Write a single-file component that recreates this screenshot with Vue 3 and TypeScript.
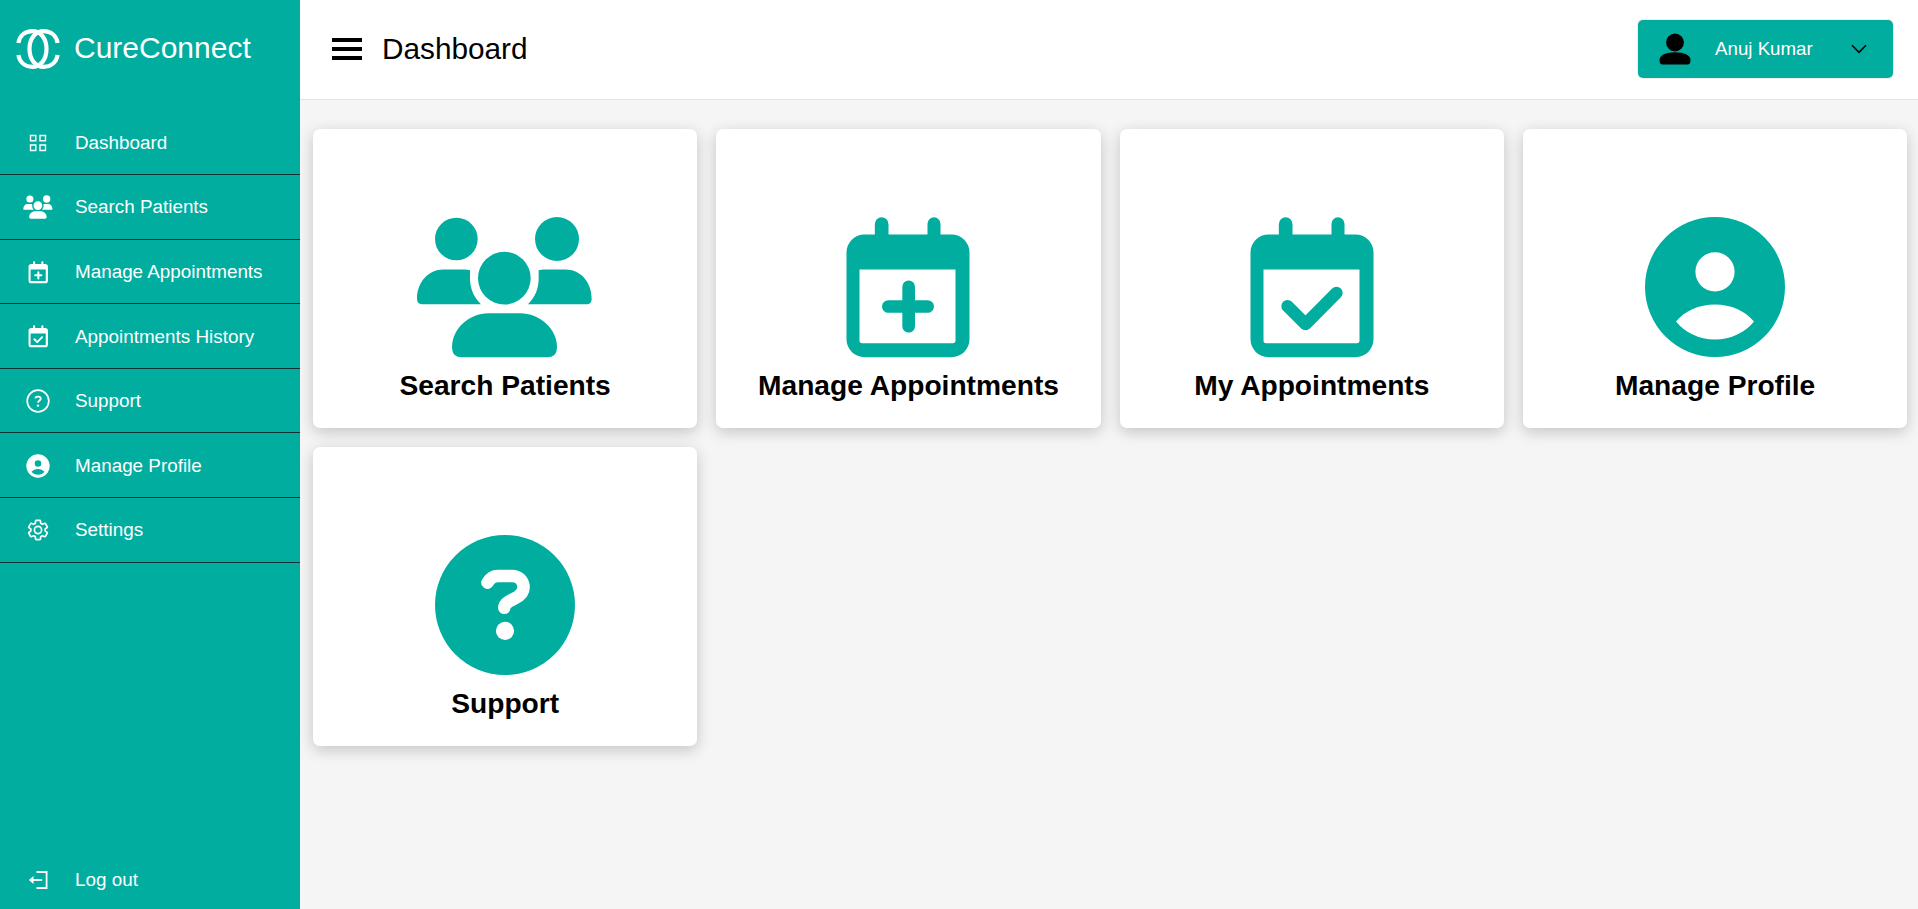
<script setup lang="ts">
interface NavItem {
  label: string
  icon: string
  size?: 'cal' | 'large' | 'wide'
}

interface Tile {
  label: string
  icon: string
  wide?: boolean
}

const navItems: NavItem[] = [
  { label: 'Dashboard', icon: 'nav-grid' },
  { label: 'Search Patients', icon: 'groups', size: 'wide' },
  { label: 'Manage Appointments', icon: 'cal-plus', size: 'cal' },
  { label: 'Appointments History', icon: 'cal-check', size: 'cal' },
  { label: 'Support', icon: 'nav-help' },
  { label: 'Manage Profile', icon: 'profile', size: 'large' },
  { label: 'Settings', icon: 'nav-gear' },
]

const tiles: Tile[] = [
  { label: 'Search Patients', icon: 'groups', wide: true },
  { label: 'Manage Appointments', icon: 'cal-plus' },
  { label: 'My Appointments', icon: 'cal-check' },
  { label: 'Manage Profile', icon: 'profile' },
  { label: 'Support', icon: 'help' },
]
</script>

<template>
  <div class="layout">
    <!-- shared icons, used by the sidebar and the tiles -->
    <svg class="sprite" xmlns="http://www.w3.org/2000/svg">
      <symbol id="groups" viewBox="345 247.5 540 504">
        <circle cx="469" cy="355.5" r="64" />
        <circle cx="771" cy="355.5" r="66" />
        <circle cx="613" cy="473" r="79" />
        <path d="M486 710H741Q771 710 771 680C771 625 720 578 660 578H566C506 578 456 625 456 680Q456 710 486 710Z" />
        <path d="M365 551H543C522 530 510 505 510 473V449C500 447 490 447 480 447H430C385 447 351 485 351 535Q351 551 365 551Z" />
        <path d="M862 551H684C705 530 716 505 716 473V449C726 447 736 447 746 447H797C842 447 875 485 875 535Q875 551 862 551Z" />
      </symbol>
      <symbol id="cal-check" viewBox="352.5 247.5 504 504">
        <path fill-rule="evenodd" d="M505 342V311A20.5 20.5 0 0 1 546 311V342H663V310A19.5 19.5 0 0 1 702 310V342H735A54 54 0 0 1 789 396V656A54 54 0 0 1 735 710H474A54 54 0 0 1 420 656V396A54 54 0 0 1 474 342ZM459 447V660Q459 668 467 668H739Q747 668 747 660V447Z" />
        <path d="M531 557L585 611L678 517" fill="none" stroke="currentColor" stroke-width="37" stroke-linecap="round" stroke-linejoin="round" />
      </symbol>
      <symbol id="cal-plus" viewBox="352.5 247.5 504 504">
        <path fill-rule="evenodd" d="M505 342V311A20.5 20.5 0 0 1 546 311V342H663V310A19.5 19.5 0 0 1 702 310V342H735A54 54 0 0 1 789 396V656A54 54 0 0 1 735 710H474A54 54 0 0 1 420 656V396A54 54 0 0 1 474 342ZM459 447V660Q459 668 467 668H739Q747 668 747 660V447Z" />
        <path d="M606.5 499V617M545.5 558H663.5" fill="none" stroke="currentColor" stroke-width="38" stroke-linecap="round" />
      </symbol>
      <symbol id="profile" viewBox="0 0 24 24">
        <path fill-rule="evenodd" d="M12 2A10 10 0 1 0 12 22A10 10 0 1 0 12 2ZM12 7.03A2.8 2.8 0 1 1 12 12.63A2.8 2.8 0 1 1 12 7.03ZM6.43 16.93C7.7 15.4 9.7 14.5 12 14.5C14.3 14.5 16.3 15.4 17.57 16.93C16.3 18.5 14.3 19.5 12 19.5C9.7 19.5 7.7 18.5 6.43 16.93Z" />
      </symbol>
      <symbol id="help" viewBox="0 0 24 24">
        <circle cx="12" cy="12" r="10" />
        <path d="M9.5 8.8C9.9 8.1 10.4 7.85 11 7.85H13C13.9 7.85 14.65 8.5 14.65 9.5C14.65 10.3 14.1 10.7 13.4 11.05C12.5 11.5 11.9 11.8 11.9 12.4" fill="none" stroke="#fff" stroke-width="1.8" stroke-linecap="round" stroke-linejoin="round" />
        <circle cx="12" cy="15.7" r="1.3" fill="#fff" />
      </symbol>
      <symbol id="nav-help" viewBox="0 0 24 24">
        <circle cx="12" cy="12" r="10.8" fill="none" stroke="currentColor" stroke-width="1.7" />
        <path d="M9.2 9.4C9.5 8.2 10.5 7.6 12 7.6C13.7 7.6 14.8 8.4 14.8 9.7C14.8 11.4 12 11.7 12 13.8" fill="none" stroke="currentColor" stroke-width="1.8" />
        <circle cx="12" cy="16.6" r="1.2" />
      </symbol>
      <symbol id="nav-grid" viewBox="0 0 24 24">
        <path d="M4.5 4.5H9.8V9.8H4.5ZM14 4.5H19.5V9.8H14ZM4.5 14H9.8V19.5H4.5ZM14 14H19.5V19.5H14Z" fill="none" stroke="currentColor" stroke-width="1.4" />
      </symbol>
      <symbol id="nav-gear" viewBox="0 0 24 24">
        <path fill="none" stroke="currentColor" stroke-width="1.7" d="M19.14 12.94c.04-.3.06-.61.06-.94 0-.32-.02-.64-.07-.94l2.03-1.58c.18-.14.23-.41.12-.61l-1.92-3.32c-.12-.22-.37-.29-.59-.22l-2.39.96c-.5-.38-1.03-.7-1.62-.94L14.4 2.81c-.04-.24-.24-.41-.48-.41h-3.84c-.24 0-.43.17-.47.41L9.25 5.35c-.59.24-1.13.57-1.62.94L5.24 5.33c-.22-.08-.47 0-.59.22L2.74 8.87c-.12.21-.08.47.12.61l2.03 1.58c-.05.3-.09.63-.09.94s.02.64.07.94l-2.03 1.58c-.18.14-.23.41-.12.61l1.92 3.32c.12.22.37.29.59.22l2.39-.96c.5.38 1.03.7 1.62.94l.36 2.54c.05.24.24.41.48.41h3.84c.24 0 .44-.17.47-.41l.36-2.54c.59-.24 1.13-.56 1.62-.94l2.39.96c.22.08.47 0 .59-.22l1.92-3.32c.12-.22.07-.47-.12-.61L19.14 12.94zM12 15.6c-1.98 0-3.6-1.62-3.6-3.6s1.62-3.6 3.6-3.6 3.6 1.62 3.6 3.6-1.62 3.6-3.6 3.6z" />
      </symbol>
    </svg>

    <aside class="sidebar">
      <div class="brand">
        <svg class="brand__logo" viewBox="0 0 44 40" fill="none" stroke="#fff" stroke-width="4.2">
          <path d="M2.4 14C3.6 6.5 9 2.2 16.5 2.2C24.5 2.2 30.5 9.5 30.5 20C30.5 30.5 24.5 37.8 16.5 37.8C9 37.8 3.6 33.5 2.4 26" />
          <path d="M41.6 14C40.4 6.5 35 2.2 27.5 2.2C19.5 2.2 13.5 9.5 13.5 20C13.5 30.5 19.5 37.8 27.5 37.8C35 37.8 40.4 33.5 41.6 26" />
        </svg>
        <span class="brand__name">CureConnect</span>
      </div>

      <nav class="nav">
        <a v-for="item in navItems" :key="item.label" class="nav__item">
          <span class="nav__icon">
            <svg class="nav__svg" :class="item.size && `nav__svg--${item.size}`"><use :href="'#' + item.icon" /></svg>
          </span>
          <span class="nav__label">{{ item.label }}</span>
        </a>
      </nav>

      <a class="nav__item nav__item--logout">
        <span class="nav__icon">
          <svg class="nav__svg" viewBox="0 0 24 24">
            <path d="M10.5 4H20.6V20H10.5" fill="none" stroke="currentColor" stroke-width="1.8" />
            <path d="M6 12H16.2" fill="none" stroke="currentColor" stroke-width="1.8" />
            <path d="M7.5 8L2.8 12L7.5 16Z" />
          </svg>
        </span>
        <span class="nav__label">Log out</span>
      </a>
    </aside>

    <div class="main">
      <header class="topbar">
        <button class="menu-btn" type="button" aria-label="Menu">
          <span /><span /><span />
        </button>
        <h1 class="topbar__title">Dashboard</h1>
        <div class="user">
          <svg class="user__avatar" viewBox="0 0 32 32">
            <circle cx="16" cy="9.5" r="8.9" />
            <path d="M.5 27C.5 22 7 19.2 16 19.2C25 19.2 31.5 22 31.5 27C31.5 30 30.5 31.5 28.5 31.5H3.5C1.5 31.5 .5 30 .5 27Z" />
          </svg>
          <span class="user__name">Anuj Kumar</span>
          <svg class="user__chevron" viewBox="0 0 16 10" fill="none" stroke="#000" stroke-width="1.6">
            <path d="M1 1.2L8 8.4L15 1.2" />
          </svg>
        </div>
      </header>

      <section class="tiles">
        <div v-for="tile in tiles" :key="tile.label" class="tile">
          <svg class="tile__icon" :class="{ 'tile__icon--wide': tile.wide }"><use :href="'#' + tile.icon" /></svg>
          <h2 class="tile__label">{{ tile.label }}</h2>
        </div>
      </section>
    </div>
  </div>
</template>

<style>
html,
body {
  margin: 0;
  padding: 0;
}
</style>

<style scoped>
.layout {
  display: flex;
  height: 909px;
  overflow: hidden;
  font-family: "Liberation Sans", Arial, sans-serif;
  background: #f5f5f5;
}

.sprite {
  display: none;
}

.sidebar {
  display: flex;
  flex-direction: column;
  flex: 0 0 300px;
  background: #00ad9f;
  color: #fff;
}

.brand {
  display: flex;
  align-items: center;
  gap: 14px;
  height: 96px;
  margin-bottom: 14.5px;
  padding-left: 16px;
  box-sizing: border-box;
}

.brand__logo {
  width: 44px;
  height: 40px;
  margin-top: 2.6px;
}

.brand__name {
  font-size: 30px;
}

.nav {
  display: flex;
  flex-direction: column;
}

.nav__item {
  display: flex;
  align-items: center;
  gap: 23px;
  height: 64.6px;
  box-sizing: border-box;
  padding: 1px 0 0 24px;
  border-bottom: 1px solid #0b2f33;
}

.nav__item--logout {
  margin-top: auto;
  margin-bottom: -3px;
  border-bottom: 0;
}

.nav__icon {
  display: flex;
  justify-content: center;
  width: 28px;
}

.nav__svg {
  flex: none;
  width: 24px;
  height: 24px;
  fill: currentColor;
}

.nav__svg--cal {
  width: 26.5px;
  height: 26.5px;
}

.nav__svg--large {
  width: 28px;
  height: 28px;
}

.nav__svg--wide {
  width: 30px;
  height: 28px;
}

.nav__label {
  font-size: 18.85px;
}

.main {
  display: flex;
  flex-direction: column;
  flex: 1;
  min-width: 0;
}

.topbar {
  display: flex;
  align-items: center;
  height: 100px;
  box-sizing: border-box;
  padding: 0 25px 2px 32px;
  background: #fff;
  border-bottom: 1px solid #e4e4e4;
}

.menu-btn {
  display: flex;
  flex-direction: column;
  justify-content: space-between;
  width: 30px;
  height: 22px;
  margin-right: 20px;
  padding: 0;
  border: 0;
  background: none;
}

.menu-btn span {
  height: 4px;
  background: #000;
}

.topbar__title {
  margin: 0;
  font-size: 29.76px;
  font-weight: 400;
  color: #000;
}

.user {
  display: flex;
  align-items: center;
  width: 255px;
  height: 58px;
  margin-left: auto;
  box-sizing: border-box;
  padding-left: 21px;
  background: #00ad9f;
  border-radius: 5px;
  box-shadow: 0 0 0 1px #eee;
}

.user__avatar {
  width: 32px;
  height: 32px;
}

.user__name {
  margin-left: 24px;
  font-size: 18.72px;
  color: #fff;
}

.user__chevron {
  width: 16px;
  height: 10px;
  margin-left: 38px;
}

.tiles {
  display: grid;
  grid-template-columns: repeat(4, 1fr);
  gap: 19px;
  padding: 29px 10.7px 0 13px;
}

.tile {
  display: flex;
  flex-direction: column;
  align-items: center;
  height: 299px;
  box-sizing: border-box;
  padding-top: 73.5px;
  background: #fff;
  border-radius: 7px;
  box-shadow: 0 4px 15px rgba(0, 0, 0, 0.2);
  color: #00ad9f;
}

.tile__icon {
  flex: none;
  width: 168px;
  height: 168px;
  fill: currentColor;
}

.tile__icon--wide {
  width: 180px;
}

.tile__label {
  margin: -0.5px 0 0;
  font-size: 28.16px;
  font-weight: 700;
  color: #000;
}
</style>
